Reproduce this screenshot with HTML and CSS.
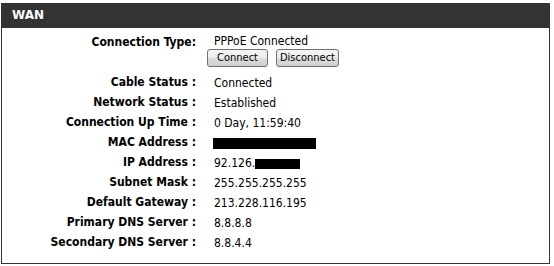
FILE: index.html
```html
<!DOCTYPE html>
<html>
<head>
<meta charset="utf-8">
<link rel="stylesheet" href="styles.css">
</head>
<body>
<div class="box">
  <div class="head">WAN</div>
  <div class="body">
    <div class="grid">
      <div class="label first">Connection Type:</div>
      <div class="value first">
        <div class="line">PPPoE Connected</div>
        <div class="buttons">
          <button class="btn btn-connect">Connect</button>
          <button class="btn btn-disconnect">Disconnect</button>
        </div>
      </div>
      <div class="label">Cable Status :</div>
      <div class="value">Connected</div>
      <div class="label">Network Status :</div>
      <div class="value">Established</div>
      <div class="label">Connection Up Time :</div>
      <div class="value">0 Day, 11:59:40</div>
      <div class="label">MAC Address :</div>
      <div class="value"><span class="redact redact-mac"></span></div>
      <div class="label">IP Address :</div>
      <div class="value">92.126.<span class="redact redact-ip"></span></div>
      <div class="label">Subnet Mask :</div>
      <div class="value">255.255.255.255</div>
      <div class="label">Default Gateway :</div>
      <div class="value">213.228.116.195</div>
      <div class="label">Primary DNS Server :</div>
      <div class="value">8.8.8.8</div>
      <div class="label">Secondary DNS Server :</div>
      <div class="value">8.8.4.4</div>
    </div>
  </div>
</div>
</body>
</html>
```
FILE: styles.css
```css
html, body {
  margin: 0;
  padding: 0;
  background: #ffffff;
}
body {
  font-family: "DejaVu Sans Condensed", "DejaVu Sans", sans-serif;
  font-size: 12px;
  color: #000;
}
.box {
  width: 549px;
  margin: 3px 0 0 1px;
}
.head {
  height: 25px;
  background: #333333;
  color: #ffffff;
  font-family: "DejaVu Sans", sans-serif;
  font-weight: bold;
  font-size: 12px;
  line-height: 25px;
  padding-left: 11px;
}
.body {
  border: 1px solid #333333;
  border-top: none;
  padding: 4px 0 11px 0;
}
.grid {
  display: grid;
  grid-template-columns: 194px 1fr;
  column-gap: 18px;
  grid-auto-rows: 20px;
}
.label {
  font-weight: bold;
  text-align: right;
  line-height: 20px;
  white-space: nowrap;
}
.value {
  line-height: 20px;
  padding-top: 1px;
  white-space: nowrap;
}
.label.first {
  grid-row: span 2;
}
.value.first {
  grid-row: span 2;
  padding-top: 2px;
}
.line {
  line-height: 15px;
}
.buttons {
  display: flex;
  gap: 8px;
  margin-left: -7px;
}
.btn {
  height: 18px;
  padding: 0;
  font-family: "DejaVu Sans Condensed", "DejaVu Sans", sans-serif;
  font-size: 11px;
  line-height: 16px;
  color: #000;
  border: 1px solid #707070;
  border-radius: 3px;
  background: linear-gradient(#f4f4f4 0%, #ececec 50%, #dddddd 51%, #cfcfcf 100%);
}
.btn-connect {
  width: 61px;
}
.btn-disconnect {
  width: 63px;
}
.redact {
  display: inline-block;
  background: #000;
  vertical-align: top;
}
.redact-mac {
  width: 103px;
  height: 11px;
  margin-top: 5px;
  margin-left: -1px;
}
.redact-ip {
  width: 45px;
  height: 10px;
  margin-top: 6px;
}
```
